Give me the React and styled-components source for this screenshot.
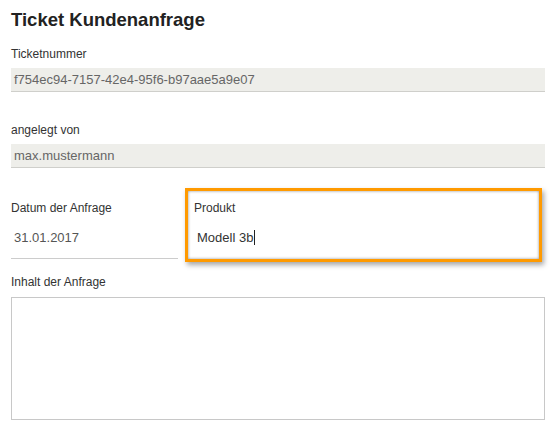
import React from 'react';
import styled, { createGlobalStyle } from 'styled-components';

const GlobalStyle = createGlobalStyle`
  html, body {
    margin: 0;
    padding: 0;
    background: #fff;
  }
  body {
    font-family: 'Liberation Sans', Arial, sans-serif;
  }
`;

const Page = styled.div`
  width: 557px;
  height: 431px;
  box-sizing: border-box;
  padding: 9px 12px 0 11px;
  overflow: hidden;
`;

const Title = styled.h1`
  margin: 0;
  font-size: 18.5px;
  line-height: 22px;
  font-weight: bold;
  color: #222;
`;

const Field = styled.div`
  margin-top: ${p => p.$top}px;
`;

const Label = styled.div`
  font-size: 12px;
  line-height: 14px;
  color: #333;
`;

const ReadOnly = styled.div`
  margin-top: 7px;
  height: 23px;
  padding-left: 3px;
  background: #eeeeea;
  border-bottom: 1px solid #cfcfcb;
  font-size: 13px;
  line-height: 23px;
  color: #666;
`;

const Row = styled.div`
  display: grid;
  grid-template-columns: 170px 357px;
  column-gap: 4px;
  margin-top: 20px;
`;

const Cell = styled.div`
  height: 74px;
  box-sizing: border-box;
  padding: ${p => (p.$focused ? '10px 6px 0' : '10px 0 0')};
  border: ${p => (p.$focused ? '3px solid #ff9a00' : '3px solid transparent')};
  border-left-width: ${p => (p.$focused ? 3 : 0)}px;
  box-shadow: ${p =>
    p.$focused
      ? 'inset 0 0 3px rgba(0, 0, 0, 0.45), 2px 3px 5px rgba(0, 0, 0, 0.35)'
      : 'none'};
`;

const Value = styled.div`
  margin-top: 15px;
  padding-left: 3px;
  height: 28px;
  font-size: 13px;
  line-height: 16px;
  color: ${p => (p.$focused ? '#333' : '#555')};
  border-bottom: ${p => (p.$line ? '1px solid #ccc' : '1px solid transparent')};
  display: flex;
  align-items: flex-start;
`;

const Caret = styled.span`
  display: inline-block;
  width: 1px;
  height: 15px;
  margin-left: 1px;
  background: #222;
`;

const TextArea = styled.textarea`
  display: block;
  margin-top: 8px;
  width: 100%;
  height: 123px;
  box-sizing: border-box;
  border: 1px solid #c8c8c8;
  border-radius: 0;
  resize: none;
  font-family: inherit;
  outline: none;
`;

const App = () => {
  return (
    <Page>
      <GlobalStyle />
      <Title>Ticket Kundenanfrage</Title>
      <Field $top={16}>
        <Label>Ticketnummer</Label>
        <ReadOnly>f754ec94-7157-42e4-95f6-b97aae5a9e07</ReadOnly>
      </Field>
      <Field $top={31}>
        <Label>angelegt von</Label>
        <ReadOnly>max.mustermann</ReadOnly>
      </Field>
      <Row>
        <Cell>
          <Label>Datum der Anfrage</Label>
          <Value $line>31.01.2017</Value>
        </Cell>
        <Cell $focused>
          <Label>Produkt</Label>
          <Value $focused>
            Modell 3b<Caret />
          </Value>
        </Cell>
      </Row>
      <Field $top={13}>
        <Label>Inhalt der Anfrage</Label>
        <TextArea />
      </Field>
    </Page>
  );
};

export default App;
